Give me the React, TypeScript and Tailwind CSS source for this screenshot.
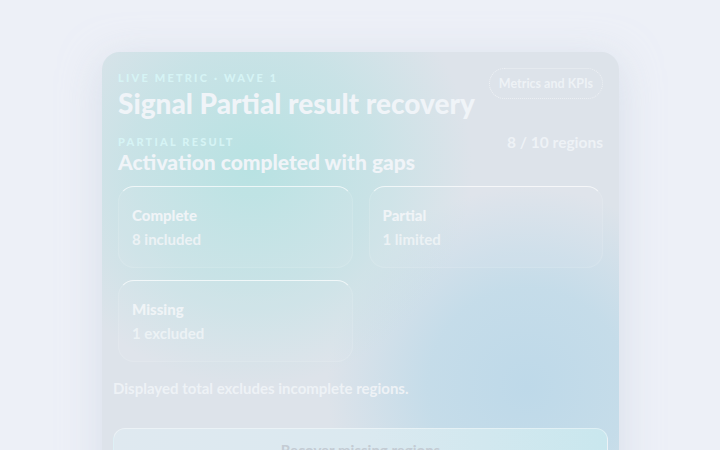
import React from 'react';

// Region status tiles shown under the summary
const tiles = [
    { label: 'Complete', detail: '8 included' },
    { label: 'Partial', detail: '1 limited' },
    { label: 'Missing', detail: '1 excluded' },
];

const StatusTile = ({ label, detail }: { label: string; detail: string }) => (
    <div className="rounded-2xl border border-white/10 border-t-white/70 bg-white/[0.06] px-[13px] pt-4 pb-4">
        <div className="text-[15px] font-black leading-6 text-[#f0f4f7]">{label}</div>
        <div className="text-[15px] font-bold leading-6 text-[#ecf2f5]">{detail}</div>
    </div>
);

export default function App() {
    return (
        <div
            className="min-h-screen bg-[#edf0f7] px-[102px] pt-[52px]"
            style={{ fontFamily: 'Lato, "Noto Sans", sans-serif' }}
        >
            <div className="w-[517px] rounded-[18px] bg-[#dde3ea] bg-[radial-gradient(circle_220px_at_150px_115px,rgba(182,226,226,0.95)_0,rgba(190,226,228,0.65)_55%,rgba(221,227,234,0)_100%),radial-gradient(circle_200px_at_425px_335px,rgba(190,217,233,1)_0,rgba(193,219,233,0.85)_50%,rgba(221,227,234,0)_100%)] px-4 pt-[18px] pb-6 shadow-[0_8px_40px_rgba(200,210,225,0.6)]">
                {/* Header */}
                <div className="flex items-start justify-between">
                    <div>
                        <div className="text-[11px] font-black uppercase leading-4 tracking-[0.2em] text-[#d6f4f5]">
                            Live metric · Wave 1
                        </div>
                        <h1 className="mt-px text-[28px] font-black leading-8 text-[#f0f4f8]">
                            Signal Partial result recovery
                        </h1>
                    </div>
                    <div className="mt-[-2px] rounded-full border border-dotted border-white/50 px-[9px] py-[6px] text-[12.5px] font-bold leading-[17px] text-[#eef2f6]">
                        Metrics and KPIs
                    </div>
                </div>

                {/* Summary */}
                <div className="mt-[15px] flex items-start justify-between">
                    <div>
                        <div className="text-[11px] font-black uppercase leading-4 tracking-[0.2em] text-[#d6f4f5]">
                            Partial result
                        </div>
                        <h2 className="text-[21px] font-black leading-6 text-[#f0f4f8]">
                            Activation completed with gaps
                        </h2>
                    </div>
                    <div className="-mt-0.5 text-[15.5px] font-bold leading-5 text-[#eef2f6]">8 / 10 regions</div>
                </div>

                {/* Status tiles */}
                <div className="mt-[12px] grid grid-cols-2 gap-x-4 gap-y-3">
                    {tiles.map((t) => (
                        <StatusTile key={t.label} label={t.label} detail={t.detail} />
                    ))}
                </div>

                <div className="-mx-[5px]">
                    <p className="mt-[15px] text-[15px] font-bold leading-[22px] text-[#eef2f6]">
                        Displayed total excludes incomplete regions.
                    </p>
                    <button className="mt-[29px] flex h-11 w-full items-center justify-center rounded-xl border border-white/40 bg-[linear-gradient(90deg,#dfe9f0_0%,#dbe9f0_50%,#c9e7ee_100%)] text-[15px] font-bold text-[#c4ccd4]">
                        Recover missing regions
                    </button>
                </div>
            </div>
        </div>
    );
}
